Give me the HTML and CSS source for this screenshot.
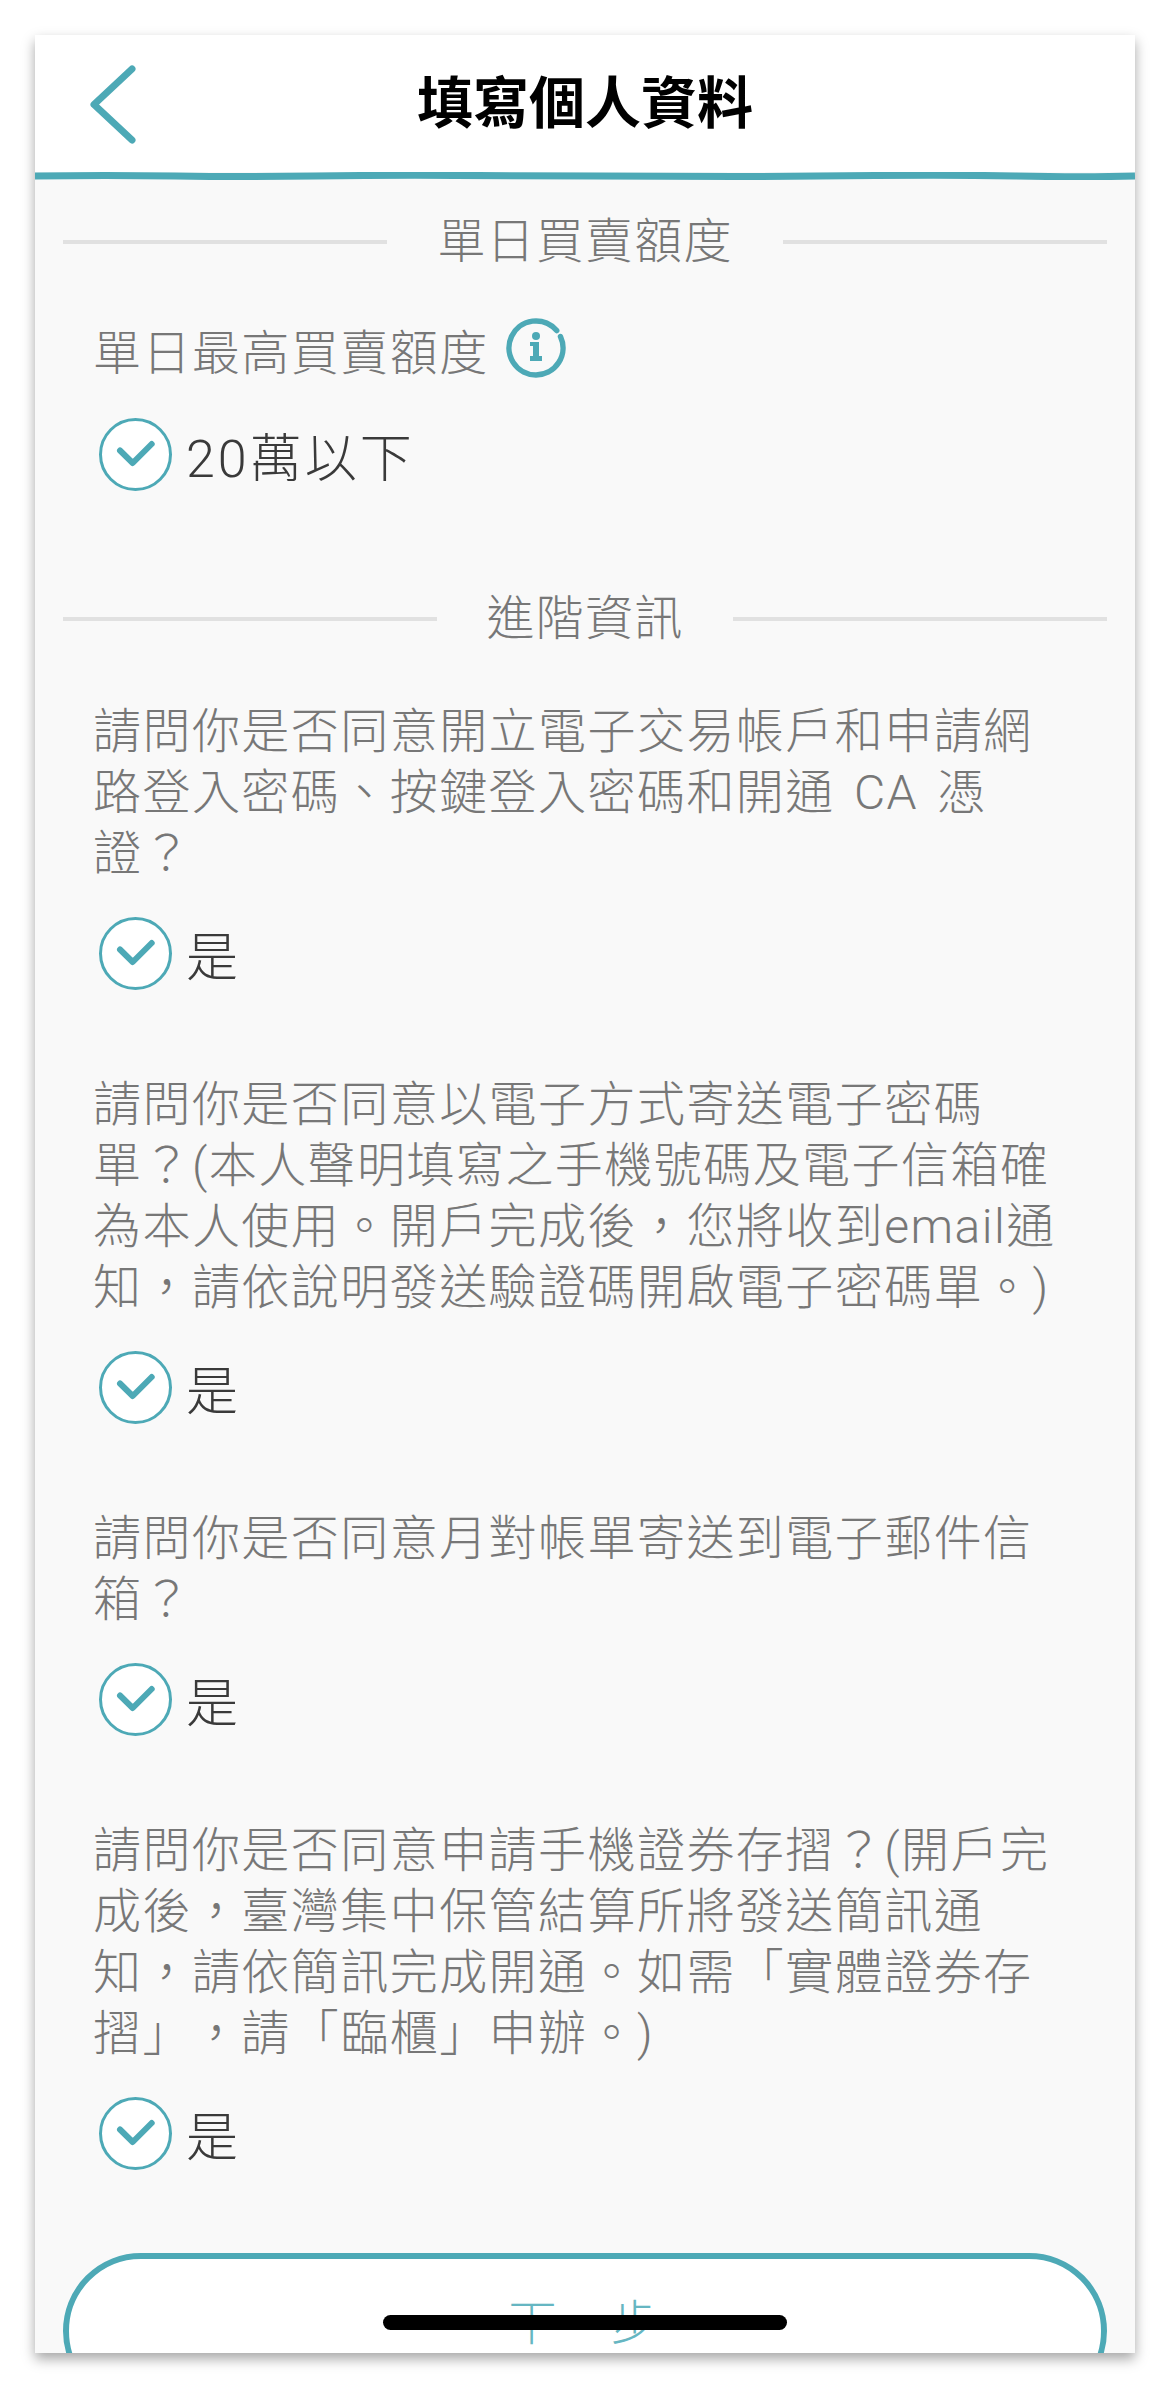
FILE: index.html
```html
<!DOCTYPE html>
<html lang="zh-Hant">
<head>
    <meta charset="UTF-8">
    <meta name="viewport" content="width=device-width, initial-scale=1.0">
    <title>填寫個人資料</title>
    <link rel="stylesheet" href="styles.css">
</head>
<body>
    <div class="screen">
        <header class="top-bar">
            <svg class="back-icon" viewBox="0 0 52 86" aria-hidden="true">
                <polyline points="45,8 7,43.5 45,79"></polyline>
            </svg>
            <h1>填寫個人資料</h1>
        </header>
        <svg class="wave-line" viewBox="0 0 1100 8" preserveAspectRatio="none" aria-hidden="true">
            <path d="M0 4 Q70 3 140 4 T280 4 T420 3.4 T560 4 T700 4.4 T840 3.6 T980 4 T1100 4"></path>
        </svg>

        <main class="content">
            <div class="section-title"><span>單日買賣額度</span></div>

            <div class="limit-label">
                單日最高買賣額度
                <svg class="info-icon" viewBox="0 0 60 60" aria-hidden="true">
                    <path class="ring" d="M50.7 12.6A27 27 0 1 0 54.5 18.6"></path>
                    <circle cx="30" cy="18" r="4"></circle>
                    <path d="M24 24h9v14h3v5H24v-5h3V28h-3z"></path>
                </svg>
            </div>
            <div class="answer">
                <svg class="check-icon" viewBox="0 0 73 73" aria-hidden="true">
                    <circle cx="36.5" cy="36.5" r="35"></circle>
                    <polyline points="21,32.5 33.7,45 52.7,26"></polyline>
                </svg>
                <span class="answer-text">20萬以下</span>
            </div>

            <div class="section-title advanced"><span>進階資訊</span></div>

            <div class="question first">請問你是否同意開立電子交易帳戶和申請網<br>路登入密碼、按鍵登入密碼和開通 CA 憑<br>證？</div>
            <div class="answer">
                <svg class="check-icon" viewBox="0 0 73 73" aria-hidden="true">
                    <circle cx="36.5" cy="36.5" r="35"></circle>
                    <polyline points="21,32.5 33.7,45 52.7,26"></polyline>
                </svg>
                <span class="answer-text">是</span>
            </div>

            <div class="question">請問你是否同意以電子方式寄送電子密碼<br>單？(本人聲明填寫之手機號碼及電子信箱確<br>為本人使用。開戶完成後，您將收到email通<br>知，請依說明發送驗證碼開啟電子密碼單。)</div>
            <div class="answer">
                <svg class="check-icon" viewBox="0 0 73 73" aria-hidden="true">
                    <circle cx="36.5" cy="36.5" r="35"></circle>
                    <polyline points="21,32.5 33.7,45 52.7,26"></polyline>
                </svg>
                <span class="answer-text">是</span>
            </div>

            <div class="question">請問你是否同意月對帳單寄送到電子郵件信<br>箱？</div>
            <div class="answer">
                <svg class="check-icon" viewBox="0 0 73 73" aria-hidden="true">
                    <circle cx="36.5" cy="36.5" r="35"></circle>
                    <polyline points="21,32.5 33.7,45 52.7,26"></polyline>
                </svg>
                <span class="answer-text">是</span>
            </div>

            <div class="question">請問你是否同意申請手機證券存摺？(開戶完<br>成後，臺灣集中保管結算所將發送簡訊通<br>知，請依簡訊完成開通。如需「實體證券存<br>摺」，請「臨櫃」申辦。)</div>
            <div class="answer">
                <svg class="check-icon" viewBox="0 0 73 73" aria-hidden="true">
                    <circle cx="36.5" cy="36.5" r="35"></circle>
                    <polyline points="21,32.5 33.7,45 52.7,26"></polyline>
                </svg>
                <span class="answer-text">是</span>
            </div>

            <button class="next-button">下一步</button>
        </main>

        <div class="home-indicator"></div>
    </div>
</body>
</html>
```

FILE: styles.css
```css
html, body {
    height: 100%;
}

body {
    margin: 0;
    padding: 35px 35px 0;
    box-sizing: border-box;
    background: #ffffff;
    font-family: Roboto, "Noto Sans CJK TC", sans-serif;
    text-spacing-trim: space-all;
    overflow: hidden;
}

.screen {
    position: relative;
    height: 2318px;
    background: #f9f9f9;
    box-shadow: 0 6px 12px rgba(0, 0, 0, 0.35);
    overflow: hidden;
}

.top-bar {
    display: grid;
    grid-template-columns: 1fr auto 1fr;
    align-items: center;
    height: 137px;
    background: #ffffff;
}

.top-bar h1 {
    margin: 0;
    color: #000000;
    font-size: 56px;
    font-weight: 700;
    line-height: 70px;
}

.back-icon {
    width: 52px;
    height: 86px;
    margin-left: 52px;
    fill: none;
    stroke: #4da9b6;
    stroke-width: 7;
    stroke-linecap: round;
    stroke-linejoin: round;
}

.wave-line {
    display: block;
    width: 100%;
    height: 8px;
    margin-bottom: -1px;
    fill: none;
    stroke: #4da9b6;
    stroke-width: 7;
}

.content {
    padding: 32px 28px 0;
}

.section-title {
    display: flex;
    align-items: center;
    gap: 50px;
    color: #777777;
    font-size: 48px;
    font-weight: 300;
    line-height: 61px;
    letter-spacing: 1.2px;
}

.section-title::before,
.section-title::after {
    content: "";
    flex: 1;
    height: 4px;
    background: #e1e1e1;
}

.section-title.advanced {
    margin-top: 97px;
}

.limit-label,
.question {
    margin-left: 30px;
    color: #777777;
    font-size: 48px;
    font-weight: 300;
    line-height: 61px;
    letter-spacing: 1.45px;
    word-spacing: 6px;
    white-space: nowrap;
}

.limit-label {
    display: flex;
    align-items: center;
    height: 61px;
    margin-top: 51px;
    margin-bottom: 34px;
}

.question {
    margin-top: 84px;
}

.question.first {
    margin-top: 52px;
}

.info-icon {
    width: 60px;
    height: 60px;
    margin: 0 0 11px 17px;
    fill: #4da9b6;
}

.info-icon .ring {
    fill: none;
    stroke: #4da9b6;
    stroke-width: 5.5;
    stroke-linecap: round;
}

.answer {
    display: flex;
    align-items: center;
    gap: 14px;
    margin: 33px 0 0 36px;
    color: #3a3a3a;
    font-size: 52px;
    font-weight: 300;
    letter-spacing: 3px;
}

.limit-label + .answer {
    margin-top: 0;
}

.answer-text {
    margin-top: 10px;
    line-height: 60px;
}

.check-icon {
    width: 73px;
    height: 73px;
    flex: none;
}

.check-icon circle {
    fill: #ffffff;
    stroke: #4da9b6;
    stroke-width: 3;
}

.check-icon polyline {
    fill: none;
    stroke: #4da9b6;
    stroke-width: 6;
    stroke-linecap: round;
    stroke-linejoin: round;
}

.next-button {
    display: block;
    width: 100%;
    height: 156px;
    margin-top: 83px;
    padding: 0 0 24px;
    background: #ffffff;
    border: 6px solid #4da9b6;
    border-radius: 78px;
    color: #66b6c2;
    font-family: inherit;
    font-size: 48px;
    font-weight: 300;
    letter-spacing: 3px;
}

.home-indicator {
    position: absolute;
    left: 348px;
    top: 2280px;
    width: 404px;
    height: 15px;
    background: #000000;
    border-radius: 8px;
}
```
